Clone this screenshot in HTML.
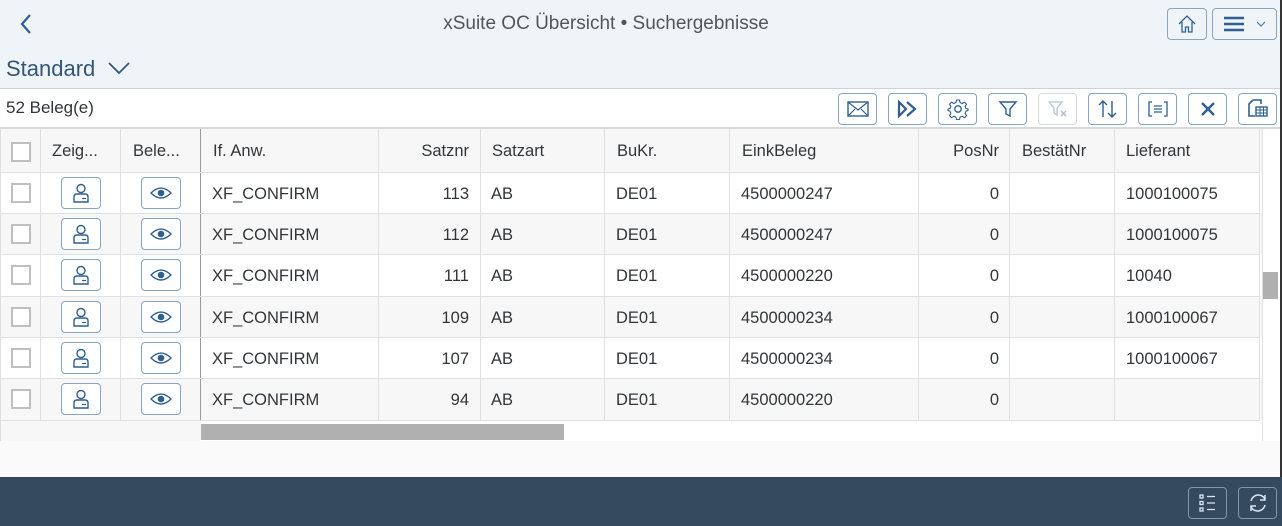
<!DOCTYPE html>
<html><head><meta charset="utf-8"><style>
*{box-sizing:border-box;margin:0;padding:0}
body{width:1282px;height:526px;overflow:hidden;background:#fafafa;font-family:"Liberation Sans",sans-serif;color:#32363a;position:relative}
.a{position:absolute}
.btn{position:absolute;border:1px solid #89a4bd;border-radius:4px;background:#fff;display:flex;align-items:center;justify-content:center}
.cell{position:absolute;font-size:16.5px;line-height:45px;white-space:nowrap}
.vl{position:absolute;width:1px;background:#e0e0e0}
.hl{position:absolute;height:1px;background:#e0e0e0;left:0;width:1260px}
.cb{position:absolute;left:11px;width:20px;height:20px;border:2px solid #bfbfbf;background:#fff}
</style></head><body>
<div class="a" style="left:0;top:0;width:1282px;height:88px;background:#eff4f9"></div>
<svg class="a" style="left:18px;top:13px" width="16" height="22"><path d="M12 2 L4 11 L12 20" fill="none" stroke="#2f5f8f" stroke-width="2.2"/></svg>
<div class="a" style="left:0;width:1212px;top:12px;text-align:center;font-size:19px;color:#555;line-height:24px">xSuite OC Übersicht • Suchergebnisse</div>
<div class="btn" style="left:1167px;top:8px;width:40px;height:32px;background:#eff4f9"><svg width="20" height="20"><path d="M2 10 L10 2 L18 10 M5 8 V18 H8.5 V13 H11.5 V18 H15 V8" fill="none" stroke="#2f5f8f" stroke-width="1.3"/></svg></div>
<div class="btn" style="left:1212px;top:8px;width:65px;height:32px;background:#eff4f9;justify-content:flex-start;padding-left:11px"><svg width="50" height="20"><path d="M0 4H20M0 10H20M0 16H20" stroke="#2f5f8f" stroke-width="2.5"/><path d="M33 8 L37 12 L41 8" fill="none" stroke="#5a7590" stroke-width="1.2"/></svg></div>
<div class="a" style="left:6px;top:55px;font-size:22px;line-height:28px;color:#355577">Standard</div>
<svg class="a" style="left:107px;top:60px" width="24" height="16"><path d="M2 3 L12 13 L22 3" fill="none" stroke="#355577" stroke-width="1.8"/></svg>
<div class="a" style="left:0;top:88px;width:1282px;height:1px;background:#d0d0d0"></div>
<div class="a" style="left:0;top:89px;width:1282px;height:39px;background:#fff"></div>
<div class="a" style="left:6px;top:96px;font-size:17px;line-height:24px">52 Beleg(e)</div>
<div class="btn" style="left:838px;top:93px;width:39px;height:32px"><svg width="22" height="16"><rect x="1" y="1" width="20" height="14" fill="none" stroke="#2f5f8f" stroke-width="1.4"/><path d="M1 1L11 9L21 1M1 15L8 8M21 15L14 8" fill="none" stroke="#2f5f8f" stroke-width="1.2"/></svg></div>
<div class="btn" style="left:888px;top:93px;width:39px;height:32px"><svg width="22" height="18"><path d="M2 2L9 9L2 16ZM10 2L18 9L10 16" fill="none" stroke="#2f5f8f" stroke-width="2.2"/></svg></div>
<div class="btn" style="left:938px;top:93px;width:39px;height:32px"><svg width="22" height="22"><circle cx="11" cy="11" r="3.2" fill="none" stroke="#2f5f8f" stroke-width="1.3"/><path d="M9.5 2H12.5L13 4.5L15.2 5.5L17.4 4.1L19.5 6.2L18.1 8.4L19 10.6L21 11V12.5L19 13.2L18.1 15.4L19.5 17.6L17.4 19.7L15.2 18.3L13 19.3L12.5 21.5H9.5L9 19.3L6.8 18.3L4.6 19.7L2.5 17.6L3.9 15.4L3 13.2L1 12.5V11L3 10.6L3.9 8.4L2.5 6.2L4.6 4.1L6.8 5.5L9 4.5Z" fill="none" stroke="#2f5f8f" stroke-width="1.1" stroke-linejoin="round"/></svg></div>
<div class="btn" style="left:988px;top:93px;width:39px;height:32px"><svg width="20" height="20"><path d="M2 3H18L12 10V17L8 15V10Z" fill="none" stroke="#2f5f8f" stroke-width="1.4"/></svg></div>
<div class="btn" style="left:1038px;top:93px;width:39px;height:32px;border-color:#d0dbe5"><svg width="22" height="20"><path d="M2 3H15L10 9V16L7 14V9Z" fill="none" stroke="#b8c4cf" stroke-width="1.3"/><path d="M14 12L19 17M19 12L14 17" stroke="#b8c4cf" stroke-width="1.6"/></svg></div>
<div class="btn" style="left:1088px;top:93px;width:39px;height:32px"><svg width="22" height="20"><path d="M6 18V2M2 6L6 2L10 6M15 2V18M11 14L15 18L19 14" fill="none" stroke="#2f5f8f" stroke-width="1.4"/></svg></div>
<div class="btn" style="left:1138px;top:93px;width:39px;height:32px"><svg width="22" height="16"><path d="M5 1H2V15H5M17 1H20V15H17M7 5H15M7 8H15M7 11H15" fill="none" stroke="#2f5f8f" stroke-width="1.3"/></svg></div>
<div class="btn" style="left:1188px;top:93px;width:39px;height:32px"><svg width="16" height="16"><path d="M2 2L14 14M14 2L2 14" stroke="#2f5f8f" stroke-width="2.4"/></svg></div>
<div class="btn" style="left:1238px;top:93px;width:39px;height:32px"><svg width="22" height="20"><path d="M6 1H14V5M6 1L2 5V17H8" fill="none" stroke="#2f5f8f" stroke-width="1.6"/><rect x="9" y="8" width="11" height="9" fill="none" stroke="#2f5f8f" stroke-width="1.4"/><path d="M9 11H20M9 14H20M13 8V17M16.5 8V17" stroke="#2f5f8f" stroke-width="1"/></svg></div>
<div class="a" style="left:0;top:127px;width:1282px;height:2px;background:#d8d8d8"></div>
<div class="a" style="left:0;top:129px;width:1262px;height:295px;background:#fff"></div>
<div class="a" style="left:0;top:129px;width:1262px;height:43px;background:#f7f7f7"></div>
<div class="a" style="left:0;top:213px;width:1262px;height:41px;background:#f7f7f7"></div>
<div class="a" style="left:0;top:296px;width:1262px;height:41px;background:#f7f7f7"></div>
<div class="a" style="left:0;top:378px;width:1262px;height:42px;background:#f7f7f7"></div>
<div class="a" style="left:0;top:420px;width:1262px;height:21px;background:#f7f7f7"></div>
<div class="a" style="left:201px;top:420px;width:1061px;height:21px;background:#fff"></div>
<div class="a" style="left:201px;top:424px;width:363px;height:16px;background:#b0b0b0"></div>
<div class="a" style="left:1262px;top:129px;width:18px;height:312px;background:#fff;border-left:1px solid #e0e0e0"></div>
<div class="a" style="left:1263px;top:272px;width:15px;height:27px;background:#b0b0b0"></div>
<div class="a" style="left:1280px;top:0;width:2px;height:477px;background:#333"></div>
<div class="vl" style="left:0;top:129px;height:312px"></div>
<div class="vl" style="left:40px;top:129px;height:291px"></div>
<div class="vl" style="left:120px;top:129px;height:291px"></div>
<div class="vl" style="left:200px;top:129px;height:291px;background:#999"></div>
<div class="vl" style="left:378px;top:129px;height:291px"></div>
<div class="vl" style="left:480px;top:129px;height:291px"></div>
<div class="vl" style="left:604px;top:129px;height:291px"></div>
<div class="vl" style="left:729px;top:129px;height:291px"></div>
<div class="vl" style="left:918px;top:129px;height:291px"></div>
<div class="vl" style="left:1009px;top:129px;height:291px"></div>
<div class="vl" style="left:1114px;top:129px;height:291px"></div>
<div class="vl" style="left:1259px;top:129px;height:291px"></div>
<div class="hl" style="top:172px"></div><div class="hl" style="top:213px"></div><div class="hl" style="top:254px"></div><div class="hl" style="top:296px"></div><div class="hl" style="top:337px"></div><div class="hl" style="top:378px"></div><div class="hl" style="top:420px"></div>
<div class="cb" style="top:142px"></div>
<div class="cell" style="top:129px;left:52px">Zeig...</div>
<div class="cell" style="top:129px;left:133px">Bele...</div>
<div class="cell" style="top:129px;left:213px">If. Anw.</div>
<div class="cell" style="top:129px;right:813px">Satznr</div>
<div class="cell" style="top:129px;left:492px">Satzart</div>
<div class="cell" style="top:129px;left:617px">BuKr.</div>
<div class="cell" style="top:129px;left:742px">EinkBeleg</div>
<div class="cell" style="top:129px;right:283px">PosNr</div>
<div class="cell" style="top:129px;left:1022px">BestätNr</div>
<div class="cell" style="top:129px;left:1126px">Lieferant</div>
<div id="rows"></div>
<script>
var d=[[172,113,"4500000247","1000100075"],[213,112,"4500000247","1000100075"],[254,111,"4500000220","10040"],[296,109,"4500000234","1000100067"],[337,107,"4500000234","1000100067"],[378,94,"4500000220",""]];
var h="";
d.forEach(function(r){var t=r[0];
h+='<div class="cb" style="top:'+(t+11)+'px"></div>';
h+='<div class="btn" style="left:61px;top:'+(t+5)+'px;width:40px;height:32px"><svg width="18" height="20"><circle cx="9" cy="5.5" r="4" fill="none" stroke="#2f5f8f" stroke-width="1.4"/><path d="M2 19V14Q2 11 5 11H13Q16 11 16 14V19Z" fill="none" stroke="#2f5f8f" stroke-width="1.4"/><path d="M10 15.5H14" stroke="#2f5f8f" stroke-width="1.2"/></svg></div>';
h+='<div class="btn" style="left:141px;top:'+(t+5)+'px;width:40px;height:32px"><svg width="22" height="14"><path d="M1 7Q11 -3 21 7Q11 17 1 7Z" fill="none" stroke="#2f5f8f" stroke-width="1.3"/><circle cx="11" cy="7" r="3.3" fill="#2f5f8f"/></svg></div>';
h+='<div class="cell" style="top:'+t+'px;left:212px">XF_CONFIRM</div>';
h+='<div class="cell" style="top:'+t+'px;right:813px">'+r[1]+'</div>';
h+='<div class="cell" style="top:'+t+'px;left:491px">AB</div>';
h+='<div class="cell" style="top:'+t+'px;left:616px">DE01</div>';
h+='<div class="cell" style="top:'+t+'px;left:741px">'+r[2]+'</div>';
h+='<div class="cell" style="top:'+t+'px;right:283px">0</div>';
h+='<div class="cell" style="top:'+t+'px;left:1126px">'+r[3]+'</div>';
});
document.getElementById("rows").innerHTML=h;
</script>
<div class="a" style="left:0;top:477px;width:1282px;height:49px;background:#354a5f"></div>
<div class="btn" style="left:1188px;top:487px;width:39px;height:32px;background:transparent;border-color:#8096ab"><svg width="20" height="20"><rect x="2" y="2" width="3" height="3" fill="none" stroke="#d9e8f8" stroke-width="1.3"/><rect x="2" y="8.5" width="3" height="3" fill="none" stroke="#d9e8f8" stroke-width="1.3"/><rect x="2" y="15" width="3" height="3" fill="none" stroke="#d9e8f8" stroke-width="1.3"/><path d="M9 3.5H17M9 10H17M9 16.5H17" stroke="#d9e8f8" stroke-width="1.2"/></svg></div>
<div class="btn" style="left:1238px;top:487px;width:39px;height:32px;background:transparent;border-color:#8096ab"><svg width="22" height="22"><path d="M4 9A7.5 7.5 0 0 1 18 7M18 13A7.5 7.5 0 0 1 4 15" fill="none" stroke="#d9e8f8" stroke-width="1.5"/><path d="M18 3V8H13M4 19V14H9" fill="none" stroke="#d9e8f8" stroke-width="1.5"/></svg></div>
</body></html>
